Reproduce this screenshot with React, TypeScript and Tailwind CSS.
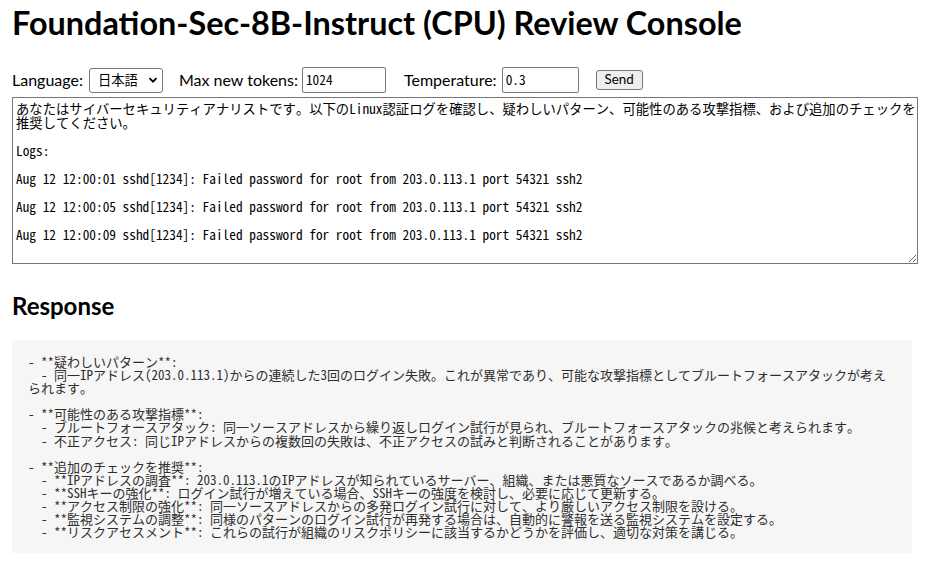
import React from "react";

const prompt = `あなたはサイバーセキュリティアナリストです。以下のLinux認証ログを確認し、疑わしいパターン、可能性のある攻撃指標、および追加のチェックを推奨してください。

Logs:

Aug 12 12:00:01 sshd[1234]: Failed password for root from 203.0.113.1 port 54321 ssh2

Aug 12 12:00:05 sshd[1234]: Failed password for root from 203.0.113.1 port 54321 ssh2

Aug 12 12:00:09 sshd[1234]: Failed password for root from 203.0.113.1 port 54321 ssh2`;

const response = `- **疑わしいパターン**:
  - 同一IPアドレス(203.0.113.1)からの連続した3回のログイン失敗。これが異常であり、可能な攻撃指標としてブルートフォースアタックが考えられます。

- **可能性のある攻撃指標**:
  - ブルートフォースアタック: 同一ソースアドレスから繰り返しログイン試行が見られ、ブルートフォースアタックの兆候と考えられます。
  - 不正アクセス: 同じIPアドレスからの複数回の失敗は、不正アクセスの試みと判断されることがあります。

- **追加のチェックを推奨**:
  - **IPアドレスの調査**: 203.0.113.1のIPアドレスが知られているサーバー、組織、または悪質なソースであるか調べる。
  - **SSHキーの強化**: ログイン試行が増えている場合、SSHキーの強度を検討し、必要に応じて更新する。
  - **アクセス制限の強化**: 同一ソースアドレスからの多発ログイン試行に対して、より厳しいアクセス制限を設ける。
  - **監視システムの調整**: 同様のパターンのログイン試行が再発する場合は、自動的に警報を送る監視システムを設定する。
  - **リスクアセスメント**: これらの試行が組織のリスクポリシーに該当するかどうかを評価し、適切な対策を講じる。`;

export default function App() {
  return (
    <div className="bg-white text-black px-3 min-h-[561px] font-['Lato','Noto_Sans_CJK_JP',sans-serif]">
      <h1 className="text-[32.4px] leading-[40px] font-bold pt-[3px] m-0 text-black">
        Foundation-Sec-8B-Instruct (CPU) Review Console
      </h1>
      <div className="flex items-center mt-[24px] h-[26px] text-[16px]">
        <span>Language:</span>
        <div className="ml-[6px] h-[25px] w-[74px] border border-[#767676] rounded-[3px] flex items-center justify-between pl-[8px] pr-[4px] text-[13.33px] whitespace-nowrap font-['Noto_Sans_CJK_JP',sans-serif]">
          <span>日本語</span>
          <svg width="10" height="10" viewBox="0 0 10 10"><path d="M1.5 3.2 L5 6.7 L8.5 3.2" fill="none" stroke="#000" strokeWidth="1.8" /></svg>
        </div>
        <span className="ml-[16px]">Max new tokens:</span>
        <div className="ml-[4px] h-[26px] w-[84px] border border-[#767676] rounded-[2px] flex items-center pl-[3px] text-[13.33px] font-['Noto_Sans_Mono_CJK_JP',monospace]">1024</div>
        <span className="ml-[18px]">Temperature:</span>
        <div className="ml-[5px] h-[26px] w-[77px] border border-[#767676] rounded-[2px] flex items-center pl-[3px] text-[13.33px] font-['Noto_Sans_Mono_CJK_JP',monospace]">0.3</div>
        <button className="ml-[17px] h-[20px] w-[47px] border border-[#767676] rounded-[3px] bg-[#efefef] text-[13.33px] flex items-center justify-center font-['Lato',sans-serif]">Send</button>
      </div>
      <textarea
        readOnly
        value={prompt}
        className="block mt-[4px] w-[906px] h-[167px] border border-[#767676] pl-[3px] pr-0 pt-[4px] pb-[2px] text-[13.33px] leading-[14px] text-black resize-y outline-none font-['Noto_Sans_Mono_CJK_JP',monospace]"
      />
      <h2 className="text-[24px] font-bold leading-[30px] mt-[27px] m-0">Response</h2>
      <pre className="mt-[19px] w-[900px] h-[213px] bg-[#f6f6f6] px-[16px] pt-[15px] whitespace-pre-wrap text-[13px] leading-[13.1px] text-[#2e2e2e] font-['Noto_Sans_Mono_CJK_JP',monospace]">
        {response}
      </pre>
    </div>
  );
}
